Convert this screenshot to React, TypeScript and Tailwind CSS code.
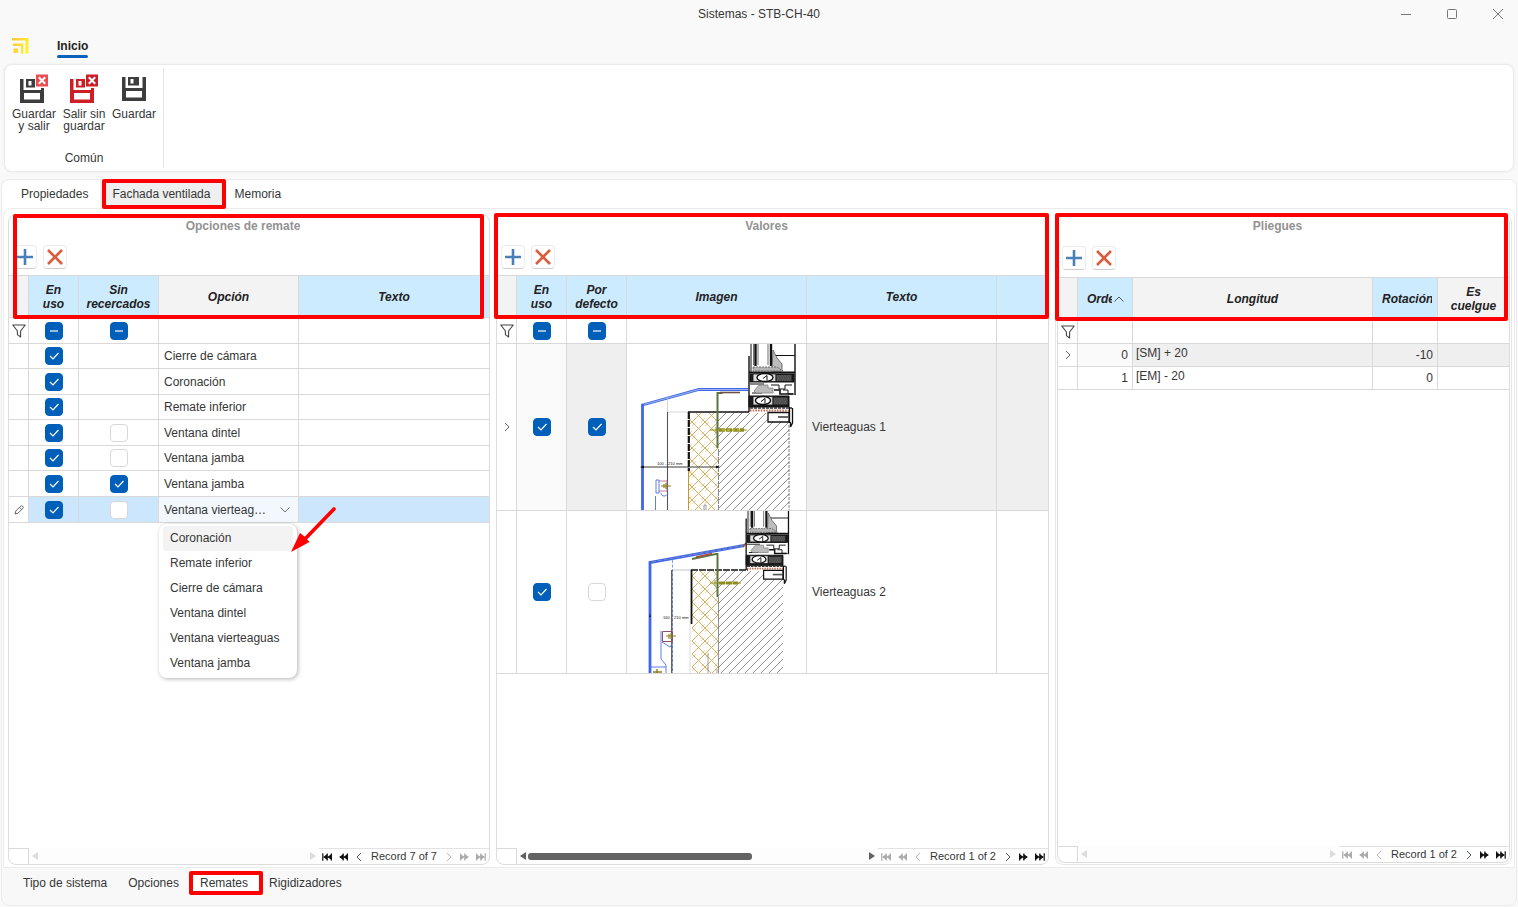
import React, { useState } from 'react';
import clsx from 'clsx';

const options = [
  { name: 'Cierre de cámara', used: true, plain: null },
  { name: 'Coronación', used: true, plain: null },
  { name: 'Remate inferior', used: true, plain: null },
  { name: 'Ventana dintel', used: true, plain: false },
  { name: 'Ventana jamba', used: true, plain: false },
  { name: 'Ventana jamba', used: true, plain: true },
];

const choices = [
  'Coronación',
  'Remate inferior',
  'Cierre de cámara',
  'Ventana dintel',
  'Ventana vierteaguas',
  'Ventana jamba',
];

const folds = [
  { order: 0, length: '[SM] + 20', rotation: -10 },
  { order: 1, length: '[EM] - 20', rotation: 0 },
];

const heading = 'h-[23px] pr-3 text-center font-bold leading-[23px] text-[#929292]';
const th = 'h-[43px] border-y border-r border-[#d9d9d9] p-0 text-center font-bold italic leading-[14px] text-[#222] last:border-r-0';
const td = 'border-b border-r border-[#d9d9d9] p-0 last:border-r-0';

function Mark({ className }: { className: string }) {
  return <span className={clsx('pointer-events-none absolute z-20 rounded-xs border-4 border-[#fe0000]', className)} />;
}

function Check({ label, on = false, mixed = false }: { label: string; on?: boolean; mixed?: boolean }) {
  const [checked, setChecked] = useState(on);
  const filled = checked || mixed;
  return (
    <label className="relative mx-auto block size-[18px]">
      <input
        type="checkbox"
        aria-label={label}
        checked={checked}
        onChange={() => setChecked(!checked)}
        className={clsx('block size-[18px] appearance-none rounded border', filled ? 'border-[#005fb8] bg-[#005fb8]' : 'border-[#d8d8d8] bg-white')}
      />
      {filled && (
        <svg viewBox="0 0 18 18" className="pointer-events-none absolute inset-0 size-[18px]" fill="none" stroke="white" strokeWidth="1.2">
          {mixed ? <path d="M5 9h8" /> : <path d="M5 9l3 3 5.5-6" />}
        </svg>
      )}
    </label>
  );
}

function Funnel() {
  return (
    <svg viewBox="0 0 14 14" className="mx-auto size-[14px]" fill="none" stroke="#444" strokeWidth="1.1" strokeLinejoin="round">
      <path d="M.8 1h12.4L8.6 7v6L5.4 10.600V7z" />
    </svg>
  );
}

function Chevron() {
  return (
    <svg viewBox="0 0 10 10" className="mx-auto size-[10px]" fill="none" stroke="#666" strokeWidth="1">
      <path d="M3 1l4 4-4 4" />
    </svg>
  );
}

function Toolbar() {
  const button = 'flex size-6 items-center justify-center rounded border border-[#ececec] border-b-[#cfcfcf] bg-white';
  return (
    <div className="flex h-[37px] items-center gap-[6px] px-1">
      <button type="button" aria-label="Añadir" className={button}>
        <svg viewBox="0 0 16 16" className="size-4 shrink-0" stroke="#4a80ba" strokeWidth="2.6">
          <path d="M8 0v16M0 8h16" />
        </svg>
      </button>
      <button type="button" aria-label="Eliminar" className={button}>
        <svg viewBox="0 0 16 16" className="size-4 shrink-0" stroke="#d9603f" strokeWidth="2.7">
          <path d="M1 1l14 14M15 1L1 15" />
        </svg>
      </button>
    </div>
  );
}

// Double-triangle glyphs of the record navigator
function Skip({ back = false, end = false, off = false, label }: { back?: boolean; end?: boolean; off?: boolean; label: string }) {
  return (
    <button type="button" aria-label={label} className="flex w-4 justify-center">
      <svg viewBox="0 0 10 8" className={clsx('h-2 w-[10px]', back && 'rotate-180')} fill={off ? '#aaa' : '#111'}>
        <path d="M0 .5h1.200v2L4.500 4 1.200 5.500v2H0zM4.200 .5h1.200v2L8.700 4 5.400 5.500v2H4.200z" />
        <path d="M.5 1L4.500 4l-4 3zM4.700 1L8.700 4l-4 3z" />
        {end && <path d="M8.600 .3h1.200v7.400h-1.200z" />}
      </svg>
    </button>
  );
}

function Step({ back = false, off = false, label }: { back?: boolean; off?: boolean; label: string }) {
  return (
    <button type="button" aria-label={label} className="flex w-4 justify-center">
      <svg viewBox="0 0 8 10" className={clsx('h-[10px] w-2', back && 'rotate-180')} fill="none" stroke={off ? '#bbb' : '#555'}>
        <path d="M2 1l4 4-4 4" />
      </svg>
    </button>
  );
}

function Navigator({ text, first = false, last = false, thumb = false }: { text: string; first?: boolean; last?: boolean; thumb?: boolean }) {
  const arrow = thumb ? '#606060' : '#dcdcdc';
  return (
    <div className="mt-auto flex h-4 items-stretch">
      <div className="w-5 border-r border-t border-[#d9d9d9]" />
      <div className="flex min-w-0 flex-1 items-center gap-[2px] rounded-b bg-[#fdfdfd] px-[3px]">
        <svg viewBox="0 0 6 8" className="h-2 w-[6px] shrink-0" fill={arrow}><path d="M6 0v8L0 4z" /></svg>
        <div className="flex-1">
          {thumb && <div className="h-[7px] w-[66%] rounded-[3px] bg-[#636363]" />}
        </div>
        <svg viewBox="0 0 6 8" className="h-2 w-[6px] shrink-0" fill={arrow}><path d="M0 0v8l6-4z" /></svg>
      </div>
      <div className="flex items-center border-t border-[#e2e2e2] text-[11px] leading-none">
        <Skip back end off={first} label="Primero" />
        <Skip back off={first} label="Página anterior" />
        <Step back off={first} label="Anterior" />
        <span className="px-1">{text}</span>
        <Step off={last} label="Siguiente" />
        <Skip off={last} label="Página siguiente" />
        <Skip end off={last} label="Último" />
      </div>
    </div>
  );
}

function Floppy({ color, badge }: { color: string; badge?: string }) {
  return (
    <svg viewBox="0 0 30 30" className="size-[30px]">
      <g transform={badge ? 'translate(1 4)' : 'translate(3 2)'}>
        <path d="M0 1h3.500v11h17V1H24v24H0zM4 15v6.500h16V15z" fill={color} fillRule="evenodd" />
        <path d="M6 1h11v8.500H6zM8.500 3v4.500h3V3z" fill={color} fillRule="evenodd" />
      </g>
      {badge && (
        <g>
          <path d="M16 0h14v14h-8v2h-6z" fill="white" />
          <path d="M17 .5h12v12H17z" fill={badge} />
          <path d="M19.800 3.300l6.400 6.400M26.200 3.300l-6.400 6.400" stroke="white" strokeWidth="2" />
        </g>
      )}
    </svg>
  );
}

// Window sill profile shared by both section drawings
function WindowProfile() {
  return (
    <g fill="none" stroke="#111">
      <path d="M123 13v56M169 1v51" strokeWidth="1.400" />
      <path d="M125 1v28M148 12.500h21" strokeWidth="1" />
      <path d="M129.500 1v22M145 1v22" strokeWidth="2.400" />
      <path d="M132 1v21M142 1v21M127.500 1v21" strokeWidth=".6" />
      <path d="M147 7l4 8 5 6v7h-10z" fill="#bdbdbd" stroke="#555" strokeWidth=".8" />
      <path d="M127 24h24l6 4h-30z" fill="#b5b5b5" stroke="#555" strokeWidth=".8" strokeDasharray="2 1" />
      <path d="M123 29.500h46" strokeWidth="1.800" />
      <path d="M124 31h44v8h-44z" fill="#1c1c1c" strokeWidth="1" />
      <path d="M127 31h23v7.500h-23z" fill="#ddd" strokeWidth=".8" />
      <ellipse cx="139" cy="34.500" rx="8" ry="4" fill="white" strokeWidth="1.400" />
      <path d="M137 35.500l4-3v5" strokeWidth="1" />
      <path d="M150 31.500h16v7h-16z" fill="#4b4b4b" strokeWidth=".8" />
      <path d="M151 33h14M152 35h13M151 37h14" stroke="#888" strokeWidth=".6" strokeDasharray="1 1.500" />
      <path d="M124 41h14M145 42h8v4h6v-4h7M126 50h10M157 47h5v4h6" strokeWidth="1" />
      <path d="M128 48l5-6h9v3h5v5h-17z" fill="#bcbcbc" stroke="#777" strokeWidth=".7" />
      <path d="M148 47h6v4h13" strokeWidth="1.600" />
      <path d="M123 53h40v11h-40z" fill="#1c1c1c" strokeWidth="1" />
      <path d="M127 53.500h20v8.500h-20z" fill="#ddd" strokeWidth=".8" />
      <ellipse cx="137" cy="57.500" rx="7.500" ry="4" fill="white" strokeWidth="1.400" />
      <path d="M135 58.500l4-3v5" strokeWidth="1" />
      <path d="M147 54h15v8h-15z" fill="#4b4b4b" strokeWidth=".8" />
      <path d="M148 56h13M149 58h13M148 60h13" stroke="#888" strokeWidth=".6" strokeDasharray="1 1.500" />
      <path d="M124 65h42" stroke="#333" strokeWidth="1.600" strokeDasharray="3 1" />
      <path d="M124 67.500h40" stroke="#c5694c" strokeWidth="2" strokeDasharray="1.500 1.200" />
      <path d="M142 69.500h21v9.500h-21z" fill="white" strokeWidth="1.300" />
      <path d="M152 74h11" stroke="#555" strokeWidth="1.800" />
      <path d="M163.500 64v16M166.500 65v15l-2 4v-5" strokeWidth="1.300" />
    </g>
  );
}

function HatchDefs({ id }: { id: string }) {
  return (
    <defs>
      <pattern id={`${id}-cross`} width="13" height="13" patternUnits="userSpaceOnUse">
        <path d="M0 0l13 13M13 0L0 13" stroke="#cfa94c" strokeWidth=".9" />
        <path d="M0 4l4-4M9 13l4-4" stroke="#dcc07a" strokeWidth=".6" />
      </pattern>
      <pattern id={`${id}-lines`} width="8" height="8" patternUnits="userSpaceOnUse">
        <path d="M-1 9L9-1M-1 1l2-2M7 9l2-2" stroke="#777" strokeWidth=".8" />
      </pattern>
    </defs>
  );
}

function SectionOne() {
  return (
    <svg viewBox="0 0 179 166" className="block h-[166px] w-[179px] bg-white" fill="none" fontFamily="Liberation Sans, sans-serif">
      <HatchDefs id="one" />
      <path d="M62 69h29v97H62z" fill="url(#one-cross)" />
      <path d="M91 69h71v97H91z" fill="url(#one-lines)" />
      <g transform="translate(-1 -1)">
        <path d="M92.500 106v61M163 82v85" stroke="#666" strokeWidth=".8" strokeDasharray="3 1" />
        <path d="M16.500 167V62L73 46.500h49" stroke="#3f68e8" strokeWidth="2.800" />
        <path d="M18 61.500L73 46.500h49" stroke="#b9c6ee" strokeWidth=".8" />
        <path d="M41.500 54v15h21" stroke="#bbb" strokeWidth=".6" />
        <path d="M41.500 69v98" stroke="#555" strokeWidth="1.100" />
        <path d="M62 69h61" stroke="#111" strokeWidth="1.600" />
        <path d="M62.800 69v59" stroke="#111" strokeWidth="2.200" strokeDasharray="7 1" />
        <path d="M62.500 128v39" stroke="#c49a2e" strokeWidth="1" />
        <path d="M91.500 105V50h5" stroke="#5b7442" strokeWidth="2" />
        <path d="M94 49.500h20" stroke="#6f5148" strokeWidth="1.600" />
        <path d="M84 87h37M90 84v6" stroke="#8f8c1c" strokeWidth="1" />
        <path d="M93 87h25" stroke="#8f8c1c" strokeWidth="3.600" strokeDasharray="6 1" />
        <path d="M96 87h20" stroke="#cfcb58" strokeWidth="1" strokeDasharray="3 2" />
        <path d="M15 124h77" stroke="#222" strokeWidth=".9" />
        <path d="M14 124l4-1.500v3zM94 124l-4-1.500v3z" fill="#111" />
        <text x="31" y="121.500" fontSize="4" fill="#111">100 .. 210 mm</text>
        <path d="M29.500 167v-14M30 150v-13h3v13zM35 150c0 4 6 4 7 0" stroke="#4b70ea" strokeWidth=".9" />
        <path d="M33 138h8v10h-8" stroke="#b0607f" strokeWidth=".8" />
        <path d="M35 143h10M38 141v4M40 140v6" stroke="#8f7f1c" strokeWidth="1.200" />
        <path d="M78 167v-5h2v5" stroke="#777" strokeWidth=".7" />
        <WindowProfile />
      </g>
    </svg>
  );
}

function SectionTwo() {
  return (
    <svg viewBox="0 0 179 162" className="block h-[162px] w-[179px] bg-white" fill="none" fontFamily="Liberation Sans, sans-serif">
      <HatchDefs id="two" />
      <path d="M65 60h26v102H65z" fill="url(#two-cross)" />
      <path d="M91 60h65v102H91z" fill="url(#two-lines)" />
      <g transform="translate(-1 -1)">
        <path d="M92.500 87v76" stroke="#777" strokeWidth=".8" />
        <path d="M24 163V52.500L118 35.500" stroke="#3f68e8" strokeWidth="2.800" />
        <path d="M26 52L118 35.500" stroke="#8b93b3" strokeWidth=".8" strokeDasharray="4 2" />
        <path d="M46.500 50v113" stroke="#6383ee" strokeWidth=".8" strokeDasharray="3 1.500" />
        <path d="M46 60h19" stroke="#aaa" strokeWidth=".7" />
        <path d="M45.800 60v103" stroke="#222" strokeWidth="1" />
        <path d="M65 60h57" stroke="#111" strokeWidth="1.600" strokeDasharray="7 1" />
        <path d="M65.500 60v54" stroke="#111" strokeWidth="1.800" />
        <path d="M64 114v49" stroke="#ccc" strokeWidth=".7" />
        <path d="M66 49l24-5h1.500v43" stroke="#5b7442" strokeWidth="2" />
        <path d="M70 47l16-3.500" stroke="#b1473d" strokeWidth="1.600" />
        <path d="M117 37l3-4" stroke="#b1473d" strokeWidth="1.600" />
        <path d="M84 73h31M89 70v6" stroke="#8f8c1c" strokeWidth="1" />
        <path d="M93 73h19" stroke="#8f8c1c" strokeWidth="3" strokeDasharray="6 1" />
        <path d="M23 107l1-4 1 4z" fill="#222" />
        <text x="37" y="108.500" fontSize="4" fill="#111">160 .. 210 mm</text>
        <path d="M35 121v28l5 6v8M24 157h16M36 132l8 5 3-4" stroke="#4b70ea" strokeWidth=".9" />
        <path d="M36.500 121.500h10v10h-10z" stroke="#8d4e6c" strokeWidth="1" />
        <path d="M40 126h10M43 124v5M45 123v6" stroke="#8f7f1c" strokeWidth="1.100" />
        <path d="M27 162h9M31 159v4" stroke="#8f7f1c" strokeWidth="1.500" />
        <path d="M82 143v20M91 159v4" stroke="#777" strokeWidth=".7" />
        <g transform="translate(7 -3.500) scale(.92)">
          <WindowProfile />
        </g>
      </g>
    </svg>
  );
}

function OptionsGrid() {
  const [value, setValue] = useState('Ventana vierteaguas');
  return (
    <section className="relative flex min-w-0 flex-col rounded-lg border border-[#dcdcdc] bg-white">
      <Mark className="-top-px left-1 right-[5px] h-[105px]" />
      <h2 className={heading}>Opciones de remate</h2>
      <Toolbar />
      <table className="w-full table-fixed border-separate border-spacing-0">
        <colgroup>
          <col className="w-5" />
          <col className="w-[50px]" />
          <col className="w-[80px]" />
          <col className="w-[140px]" />
          <col />
        </colgroup>
        <thead>
          <tr>
            <th className={clsx(th, 'bg-[#f3f3f3]')} />
            <th className={clsx(th, 'bg-[#cdebfe]')}>En<br />uso</th>
            <th className={clsx(th, 'bg-[#cdebfe]')}>Sin<br />recercados</th>
            <th className={clsx(th, 'bg-[#f3f3f3]')}>Opción</th>
            <th className={clsx(th, 'bg-[#cdebfe]')}>Texto</th>
          </tr>
        </thead>
        <tbody>
          <tr className="h-[26px]">
            <td className={td}><Funnel /></td>
            <td className={td}><Check label="Filtrar en uso" mixed /></td>
            <td className={td}><Check label="Filtrar sin recercados" mixed /></td>
            <td className={td} />
            <td className={td} />
          </tr>
          {options.map((row, idx) => (
            <tr key={idx} className="h-[25px] odd:h-[26px]">
              <td className={td} />
              <td className={td}><Check label="En uso" on={row.used} /></td>
              <td className={td}>{row.plain !== null && <Check label="Sin recercados" on={row.plain} />}</td>
              <td className={clsx(td, 'pl-[5px]')}>{row.name}</td>
              <td className={td} />
            </tr>
          ))}
          <tr className="h-[26px] bg-[#cbe6fd]">
            <td className={clsx(td, 'bg-white')}>
              <svg viewBox="0 0 10 10" className="mx-auto size-[10px]" fill="none" stroke="#555" strokeWidth=".9">
                <path d="M1 9l.8-3L6.500 1.300a1.500 1.500 0 012.200 2.200L4 8.200zM5.500 2.300l2.200 2.200" />
              </svg>
            </td>
            <td className={td}><Check label="En uso" on /></td>
            <td className={td}><Check label="Sin recercados" /></td>
            <td className={clsx(td, 'relative bg-[#f2f8fe]')}>
              <select
                aria-label="Opción"
                value={value}
                onChange={(e) => setValue(e.target.value)}
                className="block h-[25px] w-full appearance-none overflow-hidden text-ellipsis whitespace-nowrap bg-transparent pl-[5px] pr-7"
              >
                {choices.map((name) => <option key={name}>{name}</option>)}
              </select>
              <svg viewBox="0 0 10 6" className="pointer-events-none absolute right-2 top-[10px] h-[6px] w-[10px]" fill="none" stroke="#777">
                <path d="M.5 .5L5 5 9.500 .5" />
              </svg>
              {/* Open list of the selected row */}
              <ul role="listbox" className="absolute left-0 top-[27px] z-10 w-[138px] rounded-lg bg-white px-1 py-[2px] shadow-[1px_1px_4px_rgba(0,0,0,0.3)]">
                {choices.map((name, idx) => (
                  <li
                    key={name}
                    role="option"
                    aria-selected={name === value}
                    onClick={() => setValue(name)}
                    className={clsx('h-[25px] rounded px-[7px] leading-[25px]', idx === 0 && 'bg-[#f3f3f3]')}
                  >
                    {name}
                  </li>
                ))}
              </ul>
              <svg viewBox="0 0 46 48" className="pointer-events-none absolute left-[132px] top-[9px] z-20 h-12 w-[46px]">
                <path d="M43 3L14 33" stroke="#fe0000" strokeWidth="3.600" strokeLinecap="round" />
                <path d="M0 46L9 27l4.500 3.500 5 5.500z" fill="#fe0000" />
              </svg>
            </td>
            <td className={td} />
          </tr>
        </tbody>
      </table>
      <Navigator text="Record 7 of 7" last />
    </section>
  );
}

function ValuesGrid() {
  return (
    <section className="relative flex min-w-0 flex-col rounded-lg border border-[#dcdcdc] bg-white">
      <Mark className="-left-[3px] -right-px -top-[2px] h-[106px]" />
      <h2 className={heading}>Valores</h2>
      <Toolbar />
      <table className="w-full table-fixed border-separate border-spacing-0">
        <colgroup>
          <col className="w-5" />
          <col className="w-[50px]" />
          <col className="w-[60px]" />
          <col className="w-[180px]" />
          <col className="w-[190px]" />
          <col />
        </colgroup>
        <thead>
          <tr>
            <th className={clsx(th, 'bg-[#f3f3f3]')} />
            <th className={clsx(th, 'bg-[#cdebfe]')}>En<br />uso</th>
            <th className={clsx(th, 'bg-[#cdebfe]')}>Por<br />defecto</th>
            <th className={clsx(th, 'bg-[#cdebfe]')}>Imagen</th>
            <th className={clsx(th, 'bg-[#cdebfe]')}>Texto</th>
            <th className={clsx(th, 'bg-[#cdebfe]')} />
          </tr>
        </thead>
        <tbody>
          <tr className="h-[26px]">
            <td className={td}><Funnel /></td>
            <td className={td}><Check label="Filtrar en uso" mixed /></td>
            <td className={td}><Check label="Filtrar por defecto" mixed /></td>
            <td className={td} />
            <td className={td} />
            <td className={td} />
          </tr>
          <tr className="bg-[#efefef]">
            <td className={clsx(td, 'bg-white')}><Chevron /></td>
            <td className={clsx(td, 'bg-[#fafafa]')}><Check label="En uso" on /></td>
            <td className={td}><Check label="Por defecto" on /></td>
            <td className={td}><SectionOne /></td>
            <td className={clsx(td, 'pl-[5px]')}>Vierteaguas 1</td>
            <td className={td} />
          </tr>
          <tr>
            <td className={td} />
            <td className={td}><Check label="En uso" on /></td>
            <td className={td}><Check label="Por defecto" /></td>
            <td className={td}><SectionTwo /></td>
            <td className={clsx(td, 'pl-[5px]')}>Vierteaguas 2</td>
            <td className={td} />
          </tr>
        </tbody>
      </table>
      <Navigator text="Record 1 of 2" first thumb />
    </section>
  );
}

function FoldsGrid() {
  return (
    <section className="relative flex min-w-0 flex-col rounded-lg border border-[#e6e6e6] bg-white px-px pb-px">
      <Mark className="-left-px -top-[2px] right-[3px] h-[108px]" />
      <div className="flex flex-1 flex-col rounded-lg border-x border-b border-[#dcdcdc]">
        <h2 className={heading}>Pliegues</h2>
        <div className="py-px">
          <Toolbar />
        </div>
        <table className="w-full table-fixed border-separate border-spacing-0">
          <colgroup>
            <col className="w-5" />
            <col className="w-[55px]" />
            <col className="w-[240px]" />
            <col className="w-[65px]" />
            <col />
          </colgroup>
          <thead>
            <tr>
              <th className={clsx(th, 'bg-[#f3f3f3]')} />
              <th className={clsx(th, 'bg-[#cdebfe]')}>
                <div className="flex items-center gap-[2px] pl-[9px]">
                  <span className="w-[25px] overflow-hidden">Orden</span>
                  <svg viewBox="0 0 10 6" className="h-[6px] w-[10px]" fill="none" stroke="#555">
                    <path d="M.5 5.500L5 1l4.500 4.500" />
                  </svg>
                </div>
              </th>
              <th className={clsx(th, 'bg-[#f3f3f3]')}>Longitud</th>
              <th className={clsx(th, 'bg-[#cdebfe]')}>
                <div className="ml-[9px] mr-[5px] overflow-hidden text-left">Rotación</div>
              </th>
              <th className={clsx(th, 'bg-[#f3f3f3]')}>Es<br />cuelgue</th>
            </tr>
          </thead>
          <tbody>
            <tr className="h-[24px]">
              <td className={td}><Funnel /></td>
              <td className={td} />
              <td className={td} />
              <td className={td} />
              <td className={td} />
            </tr>
            {folds.map((fold, idx) => (
              <tr key={fold.order} className={clsx('h-[23px]', idx === 0 && 'bg-[#efefef]')}>
                <td className={clsx(td, 'bg-white')}>{idx === 0 && <Chevron />}</td>
                <td className={clsx(td, 'pr-1 text-right', idx === 0 && 'bg-[#fafafa]')}>{fold.order}</td>
                <td className={clsx(td, 'pl-[3px] align-top')}>{fold.length}</td>
                <td className={clsx(td, 'pr-1 text-right')}>{fold.rotation}</td>
                <td className={td} />
              </tr>
            ))}
          </tbody>
        </table>
        <Navigator text="Record 1 of 2" first />
      </div>
    </section>
  );
}

export default function App() {
  const windowButton = 'relative flex h-7 w-10 items-center justify-center';
  const ribbonButton = 'flex w-[50px] flex-col items-center leading-3';
  return (
    <div className="flex min-h-screen flex-col bg-[#f9f9f9] pb-px font-['Liberation_Sans',Arial,sans-serif] text-[12px] leading-[18px] text-[#363636]">
      <header className="relative flex h-7 items-center justify-end gap-[6px]">
        <h1 className="absolute inset-x-0 text-center">Sistemas - STB-CH-40</h1>
        <button type="button" aria-label="Minimizar" className={windowButton}>
          <svg viewBox="0 0 10 10" className="size-[10px]" stroke="#777"><path d="M0 5.500h10" /></svg>
        </button>
        <button type="button" aria-label="Maximizar" className={windowButton}>
          <svg viewBox="0 0 10 10" className="size-[10px]" fill="none" stroke="#777"><rect x=".5" y=".5" width="9" height="9" rx="1" /></svg>
        </button>
        <button type="button" aria-label="Cerrar" className={windowButton}>
          <svg viewBox="0 0 10 10" className="size-[10px]" stroke="#777"><path d="M0 0l10 10M10 0L0 10" /></svg>
        </button>
      </header>

      <nav className="flex h-9 items-center gap-7 pl-3">
        <svg viewBox="0 0 17 16" className="h-4 w-[17px]">
          <defs>
            <linearGradient id="logo" gradientUnits="userSpaceOnUse" x1="0" y1="0" x2="17" y2="6">
              <stop offset="0" stopColor="#fdc23c" />
              <stop offset="1" stopColor="#fff22e" />
            </linearGradient>
          </defs>
          <path d="M0 0h16.500v15.500h-3V2.500H0z" fill="url(#logo)" />
          <path d="M1 5.500h10.500v10H9V8H1z" fill="url(#logo)" />
          <path d="M1.500 10.500H6V15H1.500z" fill="url(#logo)" />
        </svg>
        <button type="button" className="relative h-6 font-bold text-[#222]">
          Inicio
          <span className="absolute inset-x-0 bottom-0 h-[3px] rounded-full bg-[#0a62bd]" />
        </button>
      </nav>

      <div className="mx-1 flex rounded-lg border border-[#ebebeb] bg-white py-[3px] shadow-[0_0_3px_rgba(0,0,0,0.06)]">
        <div className="flex h-[100px] flex-col justify-between border-r border-[#e3e3e3] px-1 pb-px pt-[6px]">
          <div className="flex items-start">
            <button type="button" className={ribbonButton}>
              <Floppy color="#3d3d3d" badge="#ec4b4f" />
              <span className="mt-1">Guardar y salir</span>
            </button>
            <button type="button" className={ribbonButton}>
              <Floppy color="#cf1f26" badge="#c92027" />
              <span className="mt-1">Salir sin guardar</span>
            </button>
            <button type="button" className={ribbonButton}>
              <Floppy color="#3d3d3d" />
              <span className="mt-1">Guardar</span>
            </button>
          </div>
          <div className="text-center">Común</div>
        </div>
      </div>

      <main className="mx-px mt-[7px] flex flex-1 flex-col rounded-lg border border-[#ebebeb] bg-[#f8f8f8]">
        <div className="flex h-7 items-stretch rounded-t-lg bg-white pl-[7px]">
          <button type="button" className="px-3">Propiedades</button>
          <button type="button" className="relative bg-[#efefef] px-3">
            Fachada ventilada
            <Mark className="-bottom-px -right-1 -top-px left-[2px]" />
          </button>
          <button type="button" className="px-3">Memoria</button>
        </div>
        <div className="flex flex-1 flex-col bg-white px-px">
          <div className="grid flex-1 grid-cols-[482fr_553fr_457fr] gap-[6px] rounded-t-lg border border-[#ebebeb] pb-[2px] pl-1 pr-[2px] pt-[5px]">
            <OptionsGrid />
            <ValuesGrid />
            <FoldsGrid />
          </div>
        </div>
        <div className="mb-[7px] flex h-[30px] items-stretch gap-px pl-[11px]">
          <button type="button" className="px-[10px]">Tipo de sistema</button>
          <button type="button" className="px-[10px]">Opciones</button>
          <button type="button" className="relative px-[10px]">
            <span className="absolute -right-1 bottom-1 left-0 top-0 bg-white" />
            <span className="relative">Remates</span>
            <Mark className="-left-px -right-[5px] bottom-[3px] top-[3px]" />
          </button>
          <button type="button" className="px-[10px]">Rigidizadores</button>
        </div>
      </main>
    </div>
  );
}
